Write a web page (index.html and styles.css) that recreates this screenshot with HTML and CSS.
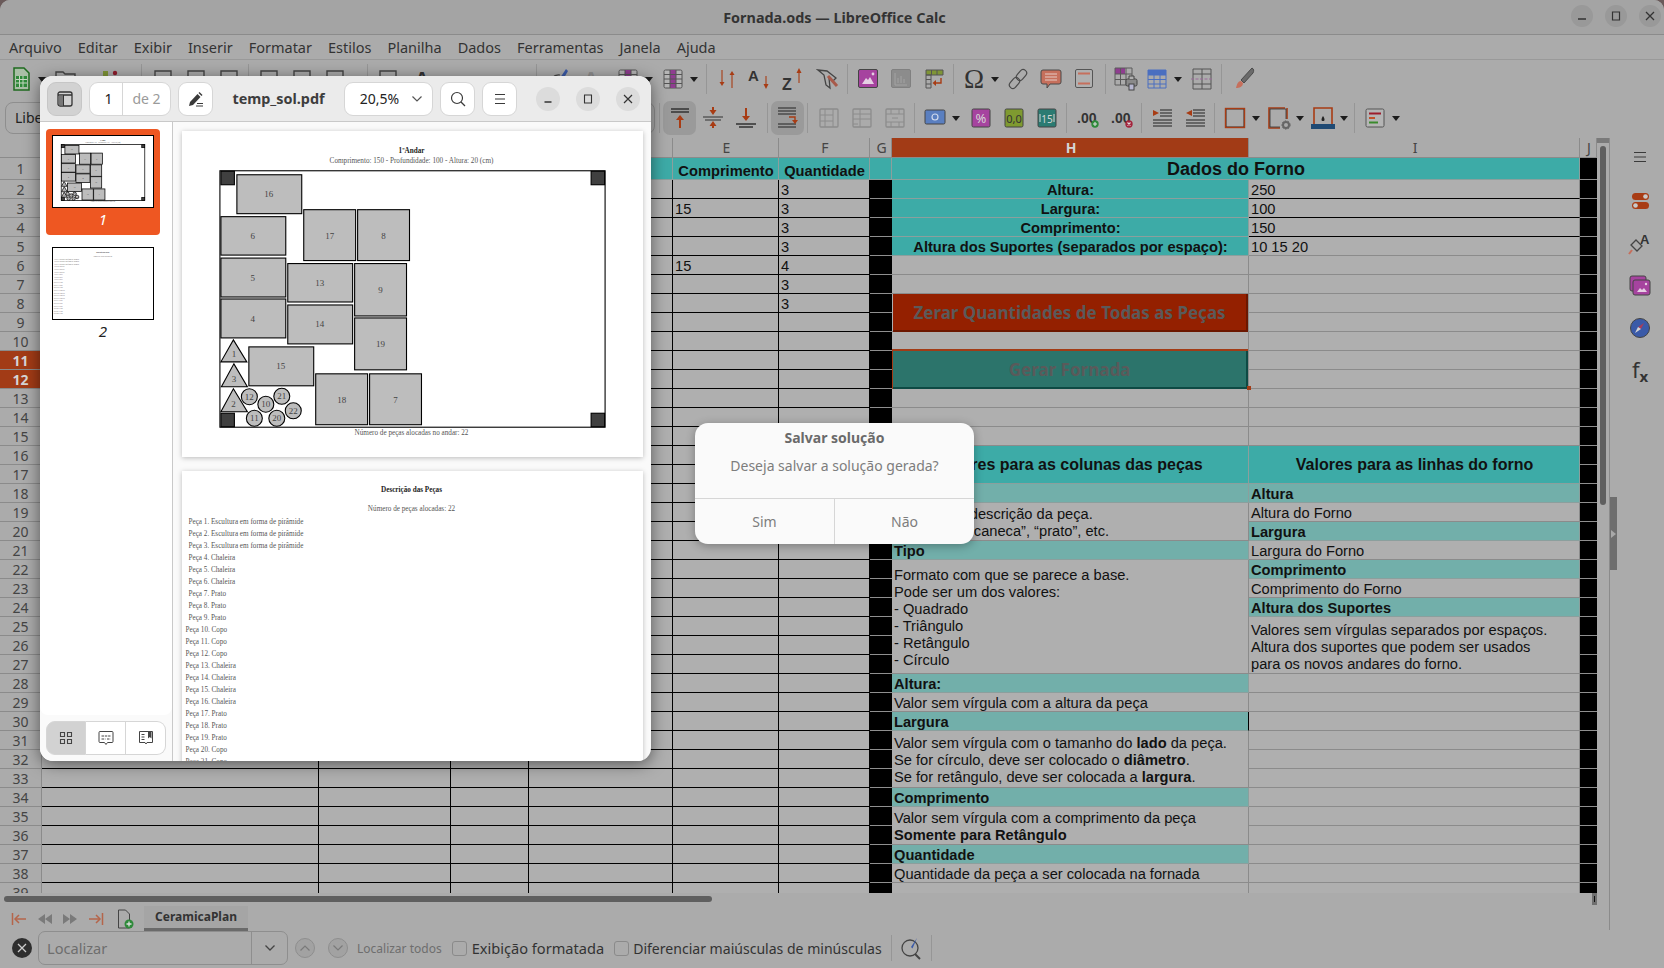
FILE: index.html
```html
<!DOCTYPE html><html lang="pt-BR">
<head>
  <meta charset="UTF-8">
  <title>Fornada.ods — LibreOffice Calc</title>
  <link rel="stylesheet" href="styles.css">
</head>
<body>
<svg class="defs" xmlns="http://www.w3.org/2000/svg">
  <symbol id="i-calc" viewBox="0 0 24 24"><path d="M5 1h10l5 5v17H5z" fill="#a9bfa6" stroke="#1f6b1f" stroke-width="1.5"/><path d="M7 9h11v11H7z" fill="#2f8a3a"/><path d="M7 12.5h11M7 16h11M10.5 9v11M14 9v11" stroke="#c4d8c0"/></symbol>
  <symbol id="i-stub" viewBox="0 0 24 24"><path d="M4 4h16v16H4z" fill="none" stroke="#444" stroke-width="1.4"/></symbol>
  <symbol id="i-folder" viewBox="0 0 24 24"><path d="M2 7V5h7l2 2h10v13H2z" fill="none" stroke="#444" stroke-width="1.4"/></symbol>
  <symbol id="i-nav" viewBox="0 0 24 24"><rect x="7" y="4" width="5" height="14" fill="#7f9536"/><circle cx="19" cy="6" r="2.200" fill="#8f1c2c"/></symbol>
  <symbol id="i-pen" viewBox="0 0 24 24"><path d="M4 20C3 12 8 7 14 8" fill="none" stroke="#444" stroke-width="1.200"/><path d="M12 14l8-12 2 2-7 12z" fill="#3a5aa8"/></symbol>
  <symbol id="i-letter" viewBox="0 0 24 24"><text x="12" y="19" text-anchor="middle" class="ic-bold" font-size="20">A</text></symbol>
  <symbol id="i-letter-off" viewBox="0 0 24 24"><text x="12" y="19" text-anchor="middle" class="ic-gray" font-size="20">A</text></symbol>
  <symbol id="i-table" viewBox="0 0 24 24"><rect x="3" y="3" width="18" height="18" rx="1.5" fill="#b5b5b5" stroke="#555"/><path d="M9 3h6v18H9z" fill="#8f3d90"/><path d="M3 7.5h18M3 12h18M3 16.500h18M9 3v18M15 3v18" stroke="#555"/></symbol>
  <symbol id="i-sort" viewBox="0 0 24 24"><path d="M7 3v14" stroke="#a83c14" stroke-width="1.1"/><path d="M4.500 15l2.500 4 2.500-4zM14.500 8l2.500-4 2.500 4z" fill="#a83c14"/><path d="M17 7v14" stroke="#a83c14" stroke-width="1.1"/></symbol>
  <symbol id="i-az" viewBox="0 0 24 24"><text x="0" y="14" class="ic-bold" font-size="15">A</text><path d="M18 9v10" stroke="#a83c14" stroke-width="1.1"/><path d="M15.500 17l2.500 5 2.500-5z" fill="#a83c14"/></symbol>
  <symbol id="i-za" viewBox="0 0 24 24"><text x="1" y="23" class="ic-bold" font-size="16">Z</text><path d="M18 5v11" stroke="#a83c14" stroke-width="1.1"/><path d="M15.500 6l2.500-5 2.500 5z" fill="#a83c14"/></symbol>
  <symbol id="i-filter" viewBox="0 0 24 24"><path d="M2 3l9 1 9 7-3 3-4-3 1 10-4-3-2-10z" fill="none" stroke="#444" stroke-width="1.3"/><path d="M12 9l9 10" stroke="#a85a4a" stroke-width="3"/></symbol>
  <symbol id="i-image" viewBox="0 0 24 24"><rect x="2.500" y="2.500" width="19" height="18" rx="1.500" fill="#a6439f" stroke="#444"/><path d="M6 17l4-6 2 2 2-3 4 7z" fill="#e5cfe3"/><circle cx="17" cy="7" r="1.400" fill="#e5cfe3"/></symbol>
  <symbol id="i-chart" viewBox="0 0 24 24"><rect x="2.500" y="2.500" width="19" height="18" rx="1.500" fill="#8c8c8c" stroke="#808080"/><path d="M6 6v12h12M9 16v-5M12 16V9M15 16v-4" stroke="#a3a3a3" fill="none"/></symbol>
  <symbol id="i-pivot" viewBox="0 0 24 24"><path d="M4 3h17v5H4z" fill="#7f9536" stroke="#555"/><path d="M4 8h5v13H4zM4 12.500h5M4 17h5M9.500 3v5M15 3v5" fill="none" stroke="#555"/><path d="M19 11v5h-7" stroke="#a83c14" stroke-width="1.400" fill="none"/><path d="M14 13l-3.500 3 3.500 3z" fill="#a83c14"/></symbol>
  <symbol id="i-omega" viewBox="0 0 24 24"><text x="12" y="21" text-anchor="middle" class="ic-omega">Ω</text></symbol>
  <symbol id="i-link" viewBox="0 0 24 24"><g fill="none" stroke="#4a4a4a" stroke-width="1.2"><rect x="12" y="2" width="7" height="12" rx="3.500" transform="rotate(40 15.500 8)"/><rect x="5" y="10" width="7" height="12" rx="3.500" transform="rotate(40 8.500 16)"/></g></symbol>
  <symbol id="i-comment" viewBox="0 0 24 24"><path d="M4 3h16a2 2 0 0 1 2 2v10a2 2 0 0 1-2 2H11l-3 4v-4H4a2 2 0 0 1-2-2V5a2 2 0 0 1 2-2z" fill="#c66f5c" stroke="#4a4a4a"/><path d="M6 7h12M6 10h12M6 13h12" stroke="#e5cdc6"/></symbol>
  <symbol id="i-header" viewBox="0 0 24 24"><rect x="3.500" y="2.500" width="17" height="18" rx="1.500" fill="#b0b0b0" stroke="#555"/><path d="M6 6.500h12M6 16.500h12" stroke="#c66f5c" stroke-width="2"/></symbol>
  <symbol id="i-tablelock" viewBox="0 0 24 24"><path d="M1 1h10v6H1z" fill="#8f3d90"/><path d="M1 1h17v17H1zM1 7h17M1 12.500h17M6.500 1v17M12 1v17" fill="none" stroke="#5a5a5a"/><rect x="12" y="12" width="11" height="7" rx="1.500" fill="#8a8a8a" stroke="#444"/><path d="M15 12V9h5v3" fill="#b0b0b0" stroke="#444"/><rect x="15" y="17" width="5" height="6" fill="#b7b7d0" stroke="#444"/></symbol>
  <symbol id="i-tableblue" viewBox="0 0 24 24"><path d="M3 3h18v5H3z" fill="#4a6fc0"/><path d="M3 3h18v18H3zM3 8h18M3 12.500h18M3 17h18M9 3v18M15 3v18" fill="none" stroke="#4a6fc0" stroke-width="1"/></symbol>
  <symbol id="i-freeze" viewBox="0 0 24 24"><path d="M3 2h18v20H3zM3 7h18M3 17h18M12 2v20" fill="none" stroke="#555"/><path d="M1 12h22" stroke="#9a6d9a" stroke-dasharray="3 1.500"/></symbol>
  <symbol id="i-brush" viewBox="0 0 24 24"><path d="M21 1c2 1 2 3 1 5l-9 10-3-3z" fill="#6a6a6a" stroke="#4a4a4a"/><path d="M10 14c-3 0-4 3-5 7 3 0 7-1 7-5z" fill="#c66f5c"/></symbol>

  <symbol id="i-atop" viewBox="0 0 24 24"><path d="M3 3h18M3 6h18" stroke="#333" stroke-width="1.300"/><path d="M12 22V12" stroke="#a83c14" stroke-width="2"/><path d="M8 14l4-5 4 5z" fill="#a83c14"/></symbol>
  <symbol id="i-amid" viewBox="0 0 24 24"><path d="M2 11h20M4 14h16" stroke="#333" stroke-width="1.200"/><path d="M12 1v6M12 22v-5" stroke="#a83c14" stroke-width="2"/><path d="M8.500 4l3.500 5 3.500-5zM8.500 20l3.500-5 3.500 5z" fill="#a83c14"/></symbol>
  <symbol id="i-abot" viewBox="0 0 24 24"><path d="M2 18h20M5 21h14" stroke="#333" stroke-width="1.300"/><path d="M12 2v10" stroke="#a83c14" stroke-width="2"/><path d="M8 10l4 5 4-5z" fill="#a83c14"/></symbol>
  <symbol id="i-wrap" viewBox="0 0 24 24"><path d="M2 2h18M2 5h18M2 8h18M2 18h18M2 21h18" stroke="#222" stroke-width="1.200"/><path d="M13 11h6v4" stroke="#a83c14" stroke-width="1.400" fill="none"/><path d="M16 14l3 4 3-4z" fill="#a83c14"/></symbol>
  <symbol id="i-merge" viewBox="0 0 24 24"><rect x="3" y="3" width="18" height="18" rx="1" fill="none" stroke="#8c8c8c" stroke-width="1.300"/><path d="M3 9h5M3 15h5M8 3v18M16 3v18M8 9h8M8 15h8" stroke="#8c8c8c" fill="none"/></symbol>
  <symbol id="i-split" viewBox="0 0 24 24"><rect x="3" y="3" width="18" height="18" rx="1" fill="none" stroke="#8c8c8c" stroke-width="1.300"/><path d="M3 8h18M3 13h18M3 18h5M10 3v18" stroke="#8c8c8c" fill="none"/></symbol>
  <symbol id="i-mergecenter" viewBox="0 0 24 24"><rect x="3" y="3" width="18" height="18" rx="1" fill="none" stroke="#8c8c8c" stroke-width="1.300"/><path d="M8 3v5h8V3M8 21v-5h8v5M3 8h5M3 16h5M16 8h5M16 16h5M9 12h6" stroke="#8c8c8c" fill="none"/></symbol>
  <symbol id="i-currency" viewBox="0 0 24 24"><rect x="2" y="4" width="20" height="14" rx="1.500" fill="#5a7fc0" stroke="#444"/><circle cx="12" cy="11" r="3" fill="none" stroke="#cfd9ec" stroke-width="1.200"/></symbol>
  <symbol id="i-percent" viewBox="0 0 24 24"><rect x="3" y="3" width="18" height="18" rx="1.500" fill="#a6439f" stroke="#444"/><text x="12" y="17" text-anchor="middle" class="ic-on" font-size="13">%</text></symbol>
  <symbol id="i-number" viewBox="0 0 24 24"><rect x="3" y="3" width="18" height="18" rx="1.500" fill="#7f9a30" stroke="#444"/><text x="12" y="17" text-anchor="middle" class="ic-dark" font-size="11">0,0</text></symbol>
  <symbol id="i-time" viewBox="0 0 24 24"><rect x="3" y="3" width="18" height="18" rx="1.500" fill="#2b7b72" stroke="#444"/><text x="12" y="16.500" text-anchor="middle" class="ic-on" font-size="10">15</text><path d="M5 8v8M19 8v8" stroke="#d5d5d5"/></symbol>
  <symbol id="i-decadd" viewBox="0 0 24 24"><text x="1" y="17" class="ic-bold" font-size="14">.00</text><circle cx="19" cy="18" r="3.700" fill="#2e8a3a"/><path d="M17 18h4M19 16v4" stroke="#ddd" stroke-width="1.100"/></symbol>
  <symbol id="i-decdel" viewBox="0 0 24 24"><text x="1" y="17" class="ic-bold" font-size="14">.00</text><circle cx="19" cy="18" r="3.700" fill="#a3233c"/><path d="M17.500 16.500l3 3M20.500 16.500l-3 3" stroke="#ddd" stroke-width="1.100"/></symbol>
  <symbol id="i-indent" viewBox="0 0 24 24"><path d="M10 4h12M10 7h12M10 10h12M3 14h19M3 17h19M3 20h19" stroke="#222" stroke-width="1.100"/><path d="M3 4l6 3-6 3z" fill="#a83c14"/></symbol>
  <symbol id="i-outdent" viewBox="0 0 24 24"><path d="M10 4h12M10 7h12M10 10h12M3 14h19M3 17h19M3 20h19" stroke="#222" stroke-width="1.100"/><path d="M9 4L3 7l6 3z" fill="#a83c14"/></symbol>
  <symbol id="i-border" viewBox="0 0 24 24"><rect x="3" y="3" width="18" height="18" fill="none" stroke="#333" stroke-width="1"/><rect x="2.500" y="2.500" width="19" height="19" fill="none" stroke="#a83c14" stroke-width="1.400"/></symbol>
  <symbol id="i-borderstyle" viewBox="0 0 24 24"><path d="M18 2H2v20h11M20 2v11" fill="none" stroke="#a83c14" stroke-width="1.600"/><path d="M3 3h16v10M3 3v18h10" fill="none" stroke="#333" stroke-width=".8"/><circle cx="19" cy="19" r="3" fill="none" stroke="#666" stroke-width="2"/><circle cx="19" cy="19" r="4.200" fill="none" stroke="#666" stroke-width="1" stroke-dasharray="1.500 1.500"/></symbol>
  <symbol id="i-bordercolor" viewBox="0 0 24 24"><path d="M3 19V2h18v17" fill="none" stroke="#a83c14" stroke-width="1.600"/><path d="M12 10c-2 3-2 5 0 5s2-2 0-5z" fill="#222"/><path d="M0 18h24v5H0z" fill="#1f4a74"/></symbol>
  <symbol id="i-cond" viewBox="0 0 24 24"><rect x="3" y="3" width="18" height="18" rx="1.500" fill="#b5b5b5" stroke="#555"/><path d="M6 7.500h12" stroke="#9c1c2c" stroke-width="2"/><path d="M6 12h6" stroke="#c2522a" stroke-width="2"/><path d="M6 16.500h9" stroke="#3a8a2c" stroke-width="2"/></symbol>

  <symbol id="i-props" viewBox="0 0 24 24"><rect x="4" y="3" width="17" height="7" rx="3.500" fill="#a83c14"/><circle cx="17.500" cy="6.500" r="2.300" fill="#c9c9c9"/><rect x="4" y="12" width="17" height="7" rx="3.500" fill="#a83c14"/><circle cx="7.500" cy="15.500" r="2.300" fill="#c9c9c9"/></symbol>
  <symbol id="i-styles" viewBox="0 0 24 24"><text x="12" y="12" class="ic-bold" font-size="13">A</text><path d="M8 8l6 6-5 5-6-6z" fill="none" stroke="#444" stroke-width="1.300"/><path d="M4 18l-3 4" stroke="#c66f5c" stroke-width="2"/></symbol>
  <symbol id="i-gallery" viewBox="0 0 24 24"><rect x="2" y="2" width="16" height="15" rx="2" fill="#a6439f" stroke="#444"/><rect x="5" y="6" width="17" height="15" rx="2" fill="#a6439f" stroke="#444"/><path d="M9 18l3-4 2 2 2-2 3 4z" fill="#e5cfe3"/><circle cx="18" cy="10" r="1.200" fill="#e5cfe3"/></symbol>
  <symbol id="i-compass" viewBox="0 0 24 24"><circle cx="12" cy="12" r="9.500" fill="#3a5aa8" stroke="#444"/><path d="M16 7l-3 6-3-2z" fill="#a83c5a"/><path d="M7 17l3-6 3 2z" fill="#d5d5d5"/></symbol>

  <symbol id="page-one" viewBox="0 0 462 326">
    <text x="230" y="21.500" class="pg-t pg-b">1ºAndar</text>
    <text x="230" y="32" class="pg-t">Comprimento: 150 - Profundidade: 100 - Altura: 20 (cm)</text>
    <rect class="frame" x="38" y="39.500" width="386" height="257"/>
    <g class="corner">
      <rect x="39" y="40" width="13.500" height="13.500"/><rect x="410" y="40" width="13.500" height="13.500"/>
      <rect x="39" y="282.500" width="13.500" height="13.500"/><rect x="410" y="282.500" width="13.500" height="13.500"/>
    </g>
    <g class="piece">
      <rect x="55" y="43.500" width="65" height="39"/><rect x="39" y="85.500" width="65" height="38.500"/>
      <rect x="122" y="78.500" width="52" height="51"/><rect x="176" y="78.500" width="52" height="51"/>
      <rect x="39" y="127" width="65" height="39"/><rect x="106" y="132.500" width="65" height="38.500"/>
      <rect x="173" y="132.500" width="52" height="52.500"/><rect x="39" y="168" width="65" height="39"/>
      <rect x="106" y="174" width="65" height="39"/><rect x="173" y="187" width="52" height="52"/>
      <rect x="67" y="216" width="65" height="39"/><rect x="134" y="243" width="52" height="51"/>
      <rect x="188" y="243" width="52" height="51"/>
      <path d="M51.500 209L65 231H39zM52 233L65.500 256H39.500zM51.500 258L65.500 281H39z"/>
      <circle cx="67.500" cy="266" r="8"/><circle cx="84" cy="273.500" r="8"/><circle cx="100" cy="265.500" r="8"/>
      <circle cx="111.500" cy="280" r="8"/><circle cx="72.500" cy="287.500" r="8"/><circle cx="95" cy="287.500" r="8"/>
    </g>
    <g class="pg-n">
      <text x="87" y="66">16</text><text x="71" y="108">6</text><text x="148" y="108">17</text><text x="202" y="108">8</text>
      <text x="71" y="150">5</text><text x="138" y="155">13</text><text x="199" y="162">9</text><text x="71" y="191">4</text>
      <text x="138" y="196">14</text><text x="199" y="216">19</text><text x="99" y="238">15</text><text x="160" y="272">18</text>
      <text x="214" y="272">7</text><text x="52" y="226">1</text><text x="52" y="251">3</text><text x="51.500" y="276">2</text>
      <text x="67.500" y="269">12</text><text x="84" y="276.500">10</text><text x="100" y="268.500">21</text>
      <text x="111.500" y="283">22</text><text x="72.500" y="290.500">11</text><text x="95" y="290.500">20</text>
    </g>
    <text x="230" y="304.500" class="pg-t">Número de peças alocadas no andar: 22</text>
  </symbol>

  <symbol id="page-two" viewBox="0 0 462 326">
    <text x="230" y="21" class="pg-t pg-b">Descrição das Peças</text>
    <text x="230" y="40" class="pg-t">Número de peças alocadas: 22</text>
    <g class="pg-l">
      <text x="6.500" y="53">Peça 1. Escultura em forma de pirâmide</text>
      <text x="6.500" y="65">Peça 2. Escultura em forma de pirâmide</text>
      <text x="6.500" y="77">Peça 3. Escultura em forma de pirâmide</text>
      <text x="6.500" y="89">Peça 4. Chaleira</text>
      <text x="6.500" y="101">Peça 5. Chaleira</text>
      <text x="6.500" y="113">Peça 6. Chaleira</text>
      <text x="6.500" y="125">Peça 7. Prato</text>
      <text x="6.500" y="137">Peça 8. Prato</text>
      <text x="6.500" y="149">Peça 9. Prato</text>
      <text x="3.500" y="161">Peça 10. Copo</text>
      <text x="3.500" y="173">Peça 11. Copo</text>
      <text x="3.500" y="185">Peça 12. Copo</text>
      <text x="3.500" y="197">Peça 13. Chaleira</text>
      <text x="3.500" y="209">Peça 14. Chaleira</text>
      <text x="3.500" y="221">Peça 15. Chaleira</text>
      <text x="3.500" y="233">Peça 16. Chaleira</text>
      <text x="3.500" y="245">Peça 17. Prato</text>
      <text x="3.500" y="257">Peça 18. Prato</text>
      <text x="3.500" y="269">Peça 19. Prato</text>
      <text x="3.500" y="281">Peça 20. Copo</text>
      <text x="3.500" y="293">Peça 21. Copo</text>
      <text x="3.500" y="305">Peça 22. Copo</text>
    </g>
  </symbol>
</svg>

<div class="app">
  <header class="titlebar">
    <span class="title">Fornada.ods — LibreOffice Calc</span>
    <div class="wm-btns">
      <span class="wm"><svg width="10" height="10" viewBox="0 0 10 10"><path d="M1 8h8" stroke="#333" stroke-width="1.400"/></svg></span>
      <span class="wm"><svg width="10" height="10" viewBox="0 0 10 10"><path d="M1.500 1h7v8h-7z" fill="none" stroke="#333" stroke-width="1.200"/></svg></span>
      <span class="wm"><svg width="10" height="10" viewBox="0 0 10 10"><path d="M1 1l8 8M9 1l-8 8" stroke="#333" stroke-width="1.300"/></svg></span>
    </div>
  </header>

  <nav class="menubar">
    <span>Arquivo</span><span>Editar</span><span>Exibir</span><span>Inserir</span><span>Formatar</span><span>Estilos</span><span>Planilha</span><span>Dados</span><span>Ferramentas</span><span>Janela</span><span>Ajuda</span>
  </nav>

  <div class="toolbar tb-one">
    <span class="tb"><svg><use href="#i-calc"/></svg></span><span class="caret"></span><span class="s1"></span>
    <span class="tb"><svg><use href="#i-folder"/></svg></span><span class="s9"></span>
    <span class="tb"><svg><use href="#i-nav"/></svg></span><span class="s14"></span>
    <span class="sep"></span><span class="s1"></span>
    <span class="tb"><svg><use href="#i-stub"/></svg></span><span class="tb"><svg><use href="#i-stub"/></svg></span><span class="tb"><svg><use href="#i-stub"/></svg></span>
    <span class="sep"></span>
    <span class="tb"><svg><use href="#i-stub"/></svg></span><span class="tb"><svg><use href="#i-stub"/></svg></span><span class="tb"><svg><use href="#i-stub"/></svg></span><span class="s13"></span>
    <span class="sep"></span>
    <span class="tb"><svg><use href="#i-stub"/></svg></span><span class="s1"></span><span class="tb"><svg><use href="#i-letter"/></svg></span><span class="s95"></span>
    <span class="sep"></span><span class="s1"></span>
    <span class="tb"><svg><use href="#i-pen"/></svg></span><span class="tb"><svg><use href="#i-letter-off"/></svg></span><span class="s4"></span>
    <span class="tb"><svg><use href="#i-table"/></svg></span><span class="caret"></span><span class="s1"></span>
    <span class="tb"><svg><use href="#i-table"/></svg></span><span class="caret"></span><span class="s3"></span>
    <span class="sep"></span>
    <span class="tb"><svg><use href="#i-sort"/></svg></span><span class="tb"><svg><use href="#i-az"/></svg></span><span class="tb"><svg><use href="#i-za"/></svg></span><span class="s2"></span><span class="tb"><svg><use href="#i-filter"/></svg></span>
    <span class="sep"></span>
    <span class="tb"><svg><use href="#i-image"/></svg></span><span class="tb"><svg><use href="#i-chart"/></svg></span><span class="tb"><svg><use href="#i-pivot"/></svg></span>
    <span class="sep"></span>
    <span class="tb"><svg><use href="#i-omega"/></svg></span><span class="caret"></span>
    <span class="tb"><svg><use href="#i-link"/></svg></span><span class="tb"><svg><use href="#i-comment"/></svg></span><span class="tb"><svg><use href="#i-header"/></svg></span><span class="s2"></span>
    <span class="sep"></span>
    <span class="tb"><svg><use href="#i-tablelock"/></svg></span><span class="tb tight"><svg><use href="#i-tableblue"/></svg></span><span class="caret"></span><span class="s1"></span><span class="tb"><svg><use href="#i-freeze"/></svg></span>
    <span class="sep"></span><span class="s1"></span>
    <span class="tb"><svg><use href="#i-brush"/></svg></span>
  </div>

  <div class="toolbar tb-two">
    <span class="fontbox">Liberation Sans</span>
    <span class="sep"></span>
    <span class="tb on"><svg><use href="#i-atop"/></svg></span><span class="tb"><svg><use href="#i-amid"/></svg></span><span class="tb"><svg><use href="#i-abot"/></svg></span><span class="s2"></span>
    <span class="sep"></span>
    <span class="tb on"><svg><use href="#i-wrap"/></svg></span>
    <span class="sep"></span><span class="s1"></span>
    <span class="tb"><svg><use href="#i-merge"/></svg></span><span class="tb"><svg><use href="#i-split"/></svg></span><span class="tb"><svg><use href="#i-mergecenter"/></svg></span>
    <span class="sep"></span>
    <span class="tb"><svg><use href="#i-currency"/></svg></span><span class="caret"></span><span class="s2"></span>
    <span class="tb"><svg><use href="#i-percent"/></svg></span><span class="tb"><svg><use href="#i-number"/></svg></span><span class="tb"><svg><use href="#i-time"/></svg></span>
    <span class="sep"></span><span class="s1"></span>
    <span class="tb"><svg><use href="#i-decadd"/></svg></span><span class="s1"></span><span class="tb"><svg><use href="#i-decdel"/></svg></span>
    <span class="sep"></span>
    <span class="tb"><svg><use href="#i-indent"/></svg></span><span class="tb"><svg><use href="#i-outdent"/></svg></span>
    <span class="sep"></span>
    <span class="tb"><svg><use href="#i-border"/></svg></span><span class="caret"></span>
    <span class="tb"><svg><use href="#i-borderstyle"/></svg></span><span class="caret"></span>
    <span class="tb"><svg><use href="#i-bordercolor"/></svg></span><span class="caret"></span><span class="s1"></span>
    <span class="sep"></span>
    <span class="tb"><svg><use href="#i-cond"/></svg></span><span class="caret"></span>
  </div>

  <div class="workspace">
    <div class="sheet">
      <div class="grid-row">
        <div class="grid-clip">
          <table class="grid">
            <colgroup><col class="c-rh"><col class="c-a"><col class="c-b"><col class="c-c"><col class="c-d"><col class="c-e"><col class="c-f"><col class="c-g"><col class="c-h"><col class="c-i"><col class="c-j"></colgroup>
            <tr class="r-head"><th></th><th>A</th><th>B</th><th>C</th><th>D</th><th>E</th><th>F</th><th>G</th><th class="sel">H</th><th>I</th><th>J</th></tr>
            <tr class="r-one"><th>1</th><td class="t"></td><td class="t"></td><td class="t"></td><td class="t"></td><td class="t b c">Comprimento</td><td class="t b c">Quantidade</td><td class="t"></td><td class="t b c big" colspan="2">Dados do Forno</td><td class="k"></td></tr>
            <tr><th>2</th><td></td><td></td><td></td><td></td><td></td><td>3</td><td class="k"></td><td class="t b c">Altura:</td><td class="iv">250</td><td class="k"></td></tr>
            <tr><th>3</th><td></td><td></td><td></td><td></td><td>15</td><td>3</td><td class="k"></td><td class="t b c">Largura:</td><td class="iv">100</td><td class="k"></td></tr>
            <tr><th>4</th><td></td><td></td><td></td><td></td><td></td><td>3</td><td class="k"></td><td class="t b c">Comprimento:</td><td class="iv">150</td><td class="k"></td></tr>
            <tr><th>5</th><td></td><td></td><td></td><td></td><td></td><td>3</td><td class="k"></td><td class="t b c">Altura dos Suportes (separados por espaço):</td><td class="s">10 15 20</td><td class="k"></td></tr>
            <tr><th>6</th><td></td><td></td><td></td><td></td><td>15</td><td>4</td><td class="k"></td><td class="s"></td><td class="s"></td><td class="k"></td></tr>
            <tr><th>7</th><td></td><td></td><td></td><td></td><td></td><td>3</td><td class="k"></td><td class="s"></td><td class="s"></td><td class="k"></td></tr>
            <tr><th>8</th><td></td><td></td><td></td><td></td><td></td><td>3</td><td class="k"></td><td class="s wrap" rowspan="2"><div class="btn btn-red">Zerar Quantidades de Todas as Peças</div></td><td class="s"></td><td class="k"></td></tr>
            <tr><th>9</th><td></td><td></td><td></td><td></td><td></td><td></td><td class="k"></td><td class="s"></td><td class="k"></td></tr>
            <tr><th>10</th><td></td><td></td><td></td><td></td><td></td><td></td><td class="k"></td><td class="s"></td><td class="s"></td><td class="k"></td></tr>
            <tr><th class="sel">11</th><td></td><td></td><td></td><td></td><td></td><td></td><td class="k"></td><td class="s wrap cur" rowspan="2"><div class="btn btn-green">Gerar Fornada</div><span class="handle"></span></td><td class="s"></td><td class="k"></td></tr>
            <tr><th class="sel">12</th><td></td><td></td><td></td><td></td><td></td><td></td><td class="k"></td><td class="s"></td><td class="k"></td></tr>
            <tr><th>13</th><td></td><td></td><td></td><td></td><td></td><td></td><td class="k"></td><td class="s"></td><td class="s"></td><td class="k"></td></tr>
            <tr><th>14</th><td></td><td></td><td></td><td></td><td></td><td></td><td class="k"></td><td class="s"></td><td class="s"></td><td class="k"></td></tr>
            <tr><th>15</th><td></td><td></td><td></td><td></td><td></td><td></td><td class="k"></td><td class="s"></td><td class="s"></td><td class="k"></td></tr>
            <tr><th>16</th><td></td><td></td><td></td><td></td><td></td><td></td><td class="k"></td><td class="t b c head2" rowspan="2">Valores para as colunas das peças</td><td class="t b c head2" rowspan="2">Valores para as linhas do forno</td><td class="k"></td></tr>
            <tr><th>17</th><td></td><td></td><td></td><td></td><td></td><td></td><td class="k"></td><td class="k"></td></tr>
            <tr><th>18</th><td></td><td></td><td></td><td></td><td></td><td></td><td class="k"></td><td class="l b">Nome</td><td class="l b">Altura</td><td class="k"></td></tr>
            <tr><th>19</th><td></td><td></td><td></td><td></td><td></td><td></td><td class="k"></td><td class="s mid" rowspan="2">Nome ou a descrição da peça.<br>Ex: “copo”, “caneca”, “prato”, etc.</td><td class="s">Altura do Forno</td><td class="k"></td></tr>
            <tr><th>20</th><td></td><td></td><td></td><td></td><td></td><td></td><td class="k"></td><td class="l b">Largura</td><td class="k"></td></tr>
            <tr><th>21</th><td></td><td></td><td></td><td></td><td></td><td></td><td class="k"></td><td class="l b">Tipo</td><td class="s">Largura do Forno</td><td class="k"></td></tr>
            <tr><th>22</th><td></td><td></td><td></td><td></td><td></td><td></td><td class="k"></td><td class="s mid" rowspan="6">Formato com que se parece a base.<br>Pode ser um dos valores:<br>- Quadrado<br>- Triângulo<br>- Retângulo<br>- Círculo</td><td class="l b">Comprimento</td><td class="k"></td></tr>
            <tr><th>23</th><td></td><td></td><td></td><td></td><td></td><td></td><td class="k"></td><td class="s">Comprimento do Forno</td><td class="k"></td></tr>
            <tr><th>24</th><td></td><td></td><td></td><td></td><td></td><td></td><td class="k"></td><td class="l b">Altura dos Suportes</td><td class="k"></td></tr>
            <tr><th>25</th><td></td><td></td><td></td><td></td><td></td><td></td><td class="k"></td><td class="s low" rowspan="3">Valores sem vírgulas separados por espaços.<br>Altura dos suportes que podem ser usados<br>para os novos andares do forno.</td><td class="k"></td></tr>
            <tr><th>26</th><td></td><td></td><td></td><td></td><td></td><td></td><td class="k"></td><td class="k"></td></tr>
            <tr><th>27</th><td></td><td></td><td></td><td></td><td></td><td></td><td class="k"></td><td class="k"></td></tr>
            <tr><th>28</th><td></td><td></td><td></td><td></td><td></td><td></td><td class="k"></td><td class="l b">Altura:</td><td class="s"></td><td class="k"></td></tr>
            <tr><th>29</th><td></td><td></td><td></td><td></td><td></td><td></td><td class="k"></td><td class="s">Valor sem vírgula com a altura da peça</td><td class="s"></td><td class="k"></td></tr>
            <tr><th>30</th><td></td><td></td><td></td><td></td><td></td><td></td><td class="k"></td><td class="l b edge">Largura</td><td class="s"></td><td class="k"></td></tr>
            <tr><th>31</th><td></td><td></td><td></td><td></td><td></td><td></td><td class="k"></td><td class="s mid" rowspan="3">Valor sem vírgula com o tamanho do <b>lado</b> da peça.<br>Se for círculo, deve ser colocado o <b>diâmetro</b>.<br>Se for retângulo, deve ser colocada a <b>largura</b>.</td><td class="s"></td><td class="k"></td></tr>
            <tr><th>32</th><td></td><td></td><td></td><td></td><td></td><td></td><td class="k"></td><td class="s"></td><td class="k"></td></tr>
            <tr><th>33</th><td></td><td></td><td></td><td></td><td></td><td></td><td class="k"></td><td class="s"></td><td class="k"></td></tr>
            <tr><th>34</th><td></td><td></td><td></td><td></td><td></td><td></td><td class="k"></td><td class="l b">Comprimento</td><td class="s"></td><td class="k"></td></tr>
            <tr><th>35</th><td></td><td></td><td></td><td></td><td></td><td></td><td class="k"></td><td class="s mid" rowspan="2">Valor sem vírgula com a comprimento da peça<br><b>Somente para Retângulo</b></td><td class="s"></td><td class="k"></td></tr>
            <tr><th>36</th><td></td><td></td><td></td><td></td><td></td><td></td><td class="k"></td><td class="s"></td><td class="k"></td></tr>
            <tr><th>37</th><td></td><td></td><td></td><td></td><td></td><td></td><td class="k"></td><td class="l b">Quantidade</td><td class="s"></td><td class="k"></td></tr>
            <tr><th>38</th><td></td><td></td><td></td><td></td><td></td><td></td><td class="k"></td><td class="s">Quantidade da peça a ser colocada na fornada</td><td class="s"></td><td class="k"></td></tr>
            <tr><th>39</th><td></td><td></td><td></td><td></td><td></td><td></td><td class="k"></td><td class="s"></td><td class="s"></td><td class="k"></td></tr>
          </table>
        </div>
        <div class="vscroll"><span class="vs-cap"></span><span class="vs-thumb"></span></div>
      </div>
      <div class="hscroll"><span class="hs-thumb"></span><span class="hs-split"></span></div>
      <div class="tabbar">
        <div class="tabnav">
          <svg width="16" height="14" viewBox="0 0 16 14"><path d="M1.500 1v12" stroke="#b5654a" stroke-width="1.500"/><path d="M4 7h11" stroke="#b5654a" stroke-width="1.500"/><path d="M8 3L4 7l4 4" fill="none" stroke="#b5654a" stroke-width="1.500"/></svg>
          <svg width="16" height="14" viewBox="0 0 16 14"><path d="M8 2L1 7l7 5zM15 2L8 7l7 5z" fill="#7a7a7a"/></svg>
          <svg width="16" height="14" viewBox="0 0 16 14"><path d="M1 2l7 5-7 5zM8 2l7 5-7 5z" fill="#7a7a7a"/></svg>
          <svg width="16" height="14" viewBox="0 0 16 14"><path d="M14.500 1v12" stroke="#b5654a" stroke-width="1.500"/><path d="M1 7h11" stroke="#b5654a" stroke-width="1.500"/><path d="M8 3l4 4-4 4" fill="none" stroke="#b5654a" stroke-width="1.500"/></svg>
          <svg class="tab-add" width="18" height="20" viewBox="0 0 18 20"><path d="M2.500 1h7l4 4v14h-11z" fill="none" stroke="#444"/><circle cx="13" cy="15" r="4.500" fill="#2e8a3a"/><path d="M10.500 15h5M13 12.500v5" stroke="#ddd" stroke-width="1.300"/></svg>
        </div>
        <span class="tab">CeramicaPlan</span>
      </div>
    </div>
    <aside class="sidebar">
      <span class="side-handle"></span>
      <svg class="menu-ic" width="16" height="12" viewBox="0 0 16 12"><path d="M2 1.500h12M2 6h12M2 10.500h12" stroke="#3a3a3a" stroke-width="1.200"/></svg>
      <svg class="side-ic"><use href="#i-props"/></svg>
      <svg class="side-ic"><use href="#i-styles"/></svg>
      <svg class="side-ic"><use href="#i-gallery"/></svg>
      <svg class="side-ic"><use href="#i-compass"/></svg>
      <span class="fx">f<sub>x</sub></span>
    </aside>
  </div>

  <div class="findbar">
    <span class="find-close"><svg width="10" height="10" viewBox="0 0 10 10"><path d="M1 1l8 8M9 1l-8 8" stroke="#ccc" stroke-width="1.300"/></svg></span>
    <div class="find-input">
      <span class="find-ph">Localizar</span>
      <span class="find-drop"><svg width="12" height="8" viewBox="0 0 12 8"><path d="M1.500 1.500L6 6l4.500-4.500" fill="none" stroke="#444" stroke-width="1.300"/></svg></span>
    </div>
    <span class="find-nav"><svg width="12" height="8" viewBox="0 0 12 8"><path d="M1.500 6.500L6 2l4.500 4.500" fill="none" stroke="#7a7a7a" stroke-width="1.200"/></svg></span>
    <span class="find-nav"><svg width="12" height="8" viewBox="0 0 12 8"><path d="M1.500 1.500L6 6l4.500-4.500" fill="none" stroke="#7a7a7a" stroke-width="1.200"/></svg></span>
    <span class="find-all">Localizar todos</span>
    <span class="chk"></span><span class="chk-label">Exibição formatada</span>
    <span class="chk chk-two"></span><span class="chk-label chk-label-two">Diferenciar maiúsculas de minúsculas</span>
    <span class="fsep"></span>
    <svg class="find-tool" width="22" height="24" viewBox="0 0 22 24"><circle cx="10" cy="12" r="8" fill="none" stroke="#444" stroke-width="1.300"/><path d="M15 18l5 5" stroke="#444" stroke-width="2"/><path d="M17 2l-6 9 1.500 1.500z" fill="#3a5aa8"/></svg>
    <span class="fsep"></span>
  </div>
</div>

<section class="pdf-win">
  <header class="pdf-head">
    <span class="pbtn pbtn-on"><svg width="16" height="16" viewBox="0 0 16 16"><rect x="1" y="1" width="14" height="14" rx="2" fill="none" stroke="#333" stroke-width="1.300"/><path d="M1 4h14" stroke="#333" stroke-width="1.300"/><path d="M2 4.500h4.500V14.500H3a1 1 0 0 1-1-1z" fill="#777"/><path d="M6.500 4v11" stroke="#333"/></svg></span>
    <div class="pager"><span class="pg-cur">1</span><span class="pg-of">de 2</span></div>
    <span class="pbtn pbtn-w"><svg width="16" height="16" viewBox="0 0 16 16"><path d="M1 15l1-4 7.500-8 3 3L5 14z" fill="#3a3a3a"/><path d="M10.500 2l1-1 3 3-1 1z" fill="#3a3a3a"/><path d="M9 12.500h6M8 15h7" stroke="#3a3a3a"/></svg></span>
    <span class="pdf-title">temp_sol.pdf</span>
    <span class="pzoom">20,5%<svg width="12" height="8" viewBox="0 0 12 8"><path d="M1.500 1.500L6 6l4.500-4.500" fill="none" stroke="#555" stroke-width="1.200"/></svg></span>
    <span class="pbtn pbtn-w pbtn-search"><svg width="16" height="16" viewBox="0 0 16 16"><circle cx="7" cy="7" r="5.500" fill="none" stroke="#3a3a3a" stroke-width="1.200"/><path d="M11 11l4 4" stroke="#3a3a3a" stroke-width="1.300"/></svg></span>
    <span class="pbtn pbtn-w"><svg width="14" height="14" viewBox="0 0 14 14"><path d="M2 2.500h10M2 7h10M2 11.500h10" stroke="#3a3a3a" stroke-width="1.100"/></svg></span>
    <div class="pdf-wm">
      <span class="pwm"><svg width="10" height="10" viewBox="0 0 10 10"><path d="M1.500 8h7" stroke="#333" stroke-width="1.300"/></svg></span>
      <span class="pwm"><svg width="10" height="10" viewBox="0 0 10 10"><path d="M1.500 1h7v8h-7z" fill="none" stroke="#333" stroke-width="1.100"/></svg></span>
      <span class="pwm"><svg width="10" height="10" viewBox="0 0 10 10"><path d="M1 1l8 8M9 1l-8 8" stroke="#333" stroke-width="1.200"/></svg></span>
    </div>
  </header>
  <div class="pdf-body">
    <div class="pdf-side">
      <div class="thumbs">
        <div class="thumb thumb-on">
          <svg class="thumb-page" viewBox="0 0 462 326" preserveAspectRatio="none"><use href="#page-one"/></svg>
          <span class="thumb-n">1</span>
        </div>
        <div class="thumb">
          <svg class="thumb-page" viewBox="0 0 462 326" preserveAspectRatio="none"><use href="#page-two"/></svg>
          <span class="thumb-n">2</span>
        </div>
      </div>
      <div class="switch">
        <span class="sw sw-on"><svg width="14" height="14" viewBox="0 0 14 14"><path d="M1.500 1.500h4v4h-4zM8.500 1.500h4v4h-4zM1.500 8.500h4v4h-4zM8.500 8.500h4v4h-4z" fill="none" stroke="#444" stroke-width="1.100"/></svg></span>
        <span class="sw"><svg width="16" height="16" viewBox="0 0 16 16"><path d="M2 1.500h12a1 1 0 0 1 1 1v9a1 1 0 0 1-1 1H9.500L8 14.500 6.500 12.500H2a1 1 0 0 1-1-1v-9a1 1 0 0 1 1-1z" fill="none" stroke="#444"/><path d="M3.500 6h9M3.500 9h4M9 9h3.500" stroke="#444" stroke-dasharray="2.500 .8"/></svg></span>
        <span class="sw"><svg width="16" height="16" viewBox="0 0 16 16"><path d="M1.500 1.500h13v11H9L8 14l-1-1.500H1.500z" fill="none" stroke="#444"/><path d="M3.500 4.500h3M3.500 7h3M3.500 9.500h3" stroke="#444"/><path d="M10 1.500h3.500v7l-1.750-1.500L10 8.500z" fill="#444"/></svg></span>
      </div>
    </div>
    <div class="pdf-main">
      <div class="pdf-page"><svg class="page-art" width="461" height="326"><use href="#page-one"/></svg></div>
      <div class="pdf-page"><svg class="page-art" width="461" height="326"><use href="#page-two"/></svg></div>
    </div>
  </div>
</section>

<section class="dialog">
  <div class="dlg-text">
    <h2>Salvar solução</h2>
    <p>Deseja salvar a solução gerada?</p>
  </div>
  <div class="dlg-btns"><span>Sim</span><span>Não</span></div>
</section>
</body>
</html>
```

FILE: styles.css
```css
* { box-sizing: border-box; }

body {
  margin: 0;
  width: 1664px;
  height: 968px;
  overflow: hidden;
  position: relative;
  background: #6a5a5a;
  font-family: "Noto Sans", sans-serif;
  color: #333;
}

.defs { display: none; }

.app {
  width: 1664px;
  height: 968px;
  display: flex;
  flex-direction: column;
  background: #ababab;
  border-radius: 10px 10px 0 0;
  overflow: hidden;
}

/* window title */
.titlebar {
  height: 35px;
  padding-left: 5px;
  background: #a4a4a4;
  border-bottom: 1px solid #8b8b8b;
  display: flex;
  align-items: center;
  justify-content: center;
  position: relative;
}

.title { font-size: 14.400px; font-weight: 700; color: #333; }

.wm-btns {
  position: absolute;
  right: 3px;
  top: 5px;
  display: flex;
  gap: 12px;
}

.wm {
  width: 22px;
  height: 22px;
  border-radius: 50%;
  background: #999;
  display: flex;
  align-items: center;
  justify-content: center;
}

.menubar {
  height: 25px;
  display: flex;
  gap: 16px;
  align-items: center;
  padding-left: 9px;
  font-size: 14.500px;
  color: #333;
  border-bottom: 1px solid #999;
}

/* toolbars */
.toolbar {
  display: flex;
  align-items: center;
  position: relative;
}

.tb-one { height: 38px; padding-left: 4px; }
.tb-two { height: 40px; padding-left: 5px; }

.tb {
  width: 33px;
  height: 34px;
  flex: none;
  display: flex;
  align-items: center;
  justify-content: center;
  border-radius: 7px;
}

.tb svg { width: 24px; height: 24px; }
.tb.on { background: #9a9a9a; }
.tb.tight { margin-left: -2px; }

.s1, .s2, .s3, .s4, .s9, .s13, .s14, .s95 { flex: none; }
.s1 { width: 1px; }
.s2 { width: 2px; }
.s3 { width: 3px; }
.s4 { width: 4px; }
.s9 { width: 9px; }
.s13 { width: 13px; }
.s14 { width: 14px; }
.s95 { width: 95px; }

.caret {
  width: 11px;
  height: 8px;
  flex: none;
  position: relative;
}

.caret::after {
  content: "";
  position: absolute;
  left: 1px;
  top: 2px;
  border-left: 4px solid transparent;
  border-right: 4px solid transparent;
  border-top: 5px solid #1c1c1c;
}

.sep {
  width: 1px;
  height: 30px;
  background: #969696;
  margin: 0 3px;
  flex: none;
}

.fontbox {
  width: 650px;
  height: 32px;
  border: 1px solid #8e8e8e;
  border-radius: 8px;
  font-size: 14px;
  line-height: 30px;
  padding-left: 9px;
  color: #222;
  margin-right: 1px;
  flex: none;
}

.ic-bold { font-family: "Liberation Sans", sans-serif; font-weight: 700; fill: #333; }
.ic-gray { font-family: "Liberation Sans", sans-serif; font-weight: 700; fill: #8f8f8f; }
.ic-omega { font-family: "Liberation Serif", serif; font-size: 27px; fill: #333; }
.ic-on { font-family: "Noto Sans", sans-serif; fill: #d5d5d5; }
.ic-dark { font-family: "Noto Sans", sans-serif; fill: #333; }

/* spreadsheet */
.workspace { flex: 1; display: flex; min-height: 0; }
.sheet { width: 1609px; display: flex; flex-direction: column; flex: none; }
.grid-row { height: 755px; display: flex; flex: none; }
.grid-clip { width: 1597px; height: 755px; overflow: hidden; flex: none; }

.grid {
  table-layout: fixed;
  width: 1597px;
  border-collapse: separate;
  border-spacing: 0;
  font-family: "Liberation Sans", sans-serif;
  font-size: 14.67px;
  line-height: 15px;
  color: #111;
}

.c-rh { width: 42px; }
.c-a { width: 277px; }
.c-b { width: 132px; }
.c-c { width: 78px; }
.c-d { width: 144px; }
.c-e { width: 106px; }
.c-f { width: 91px; }
.c-g { width: 22px; }
.c-h { width: 357px; }
.c-i { width: 331px; }
.c-j { width: 17px; }

.grid tr { height: 19px; }
.grid .r-head { height: 20px; }
.grid .r-one { height: 22px; }

.grid th {
  background: #ababab;
  border-right: 1px solid #8b8b8b;
  border-bottom: 1px solid #8b8b8b;
  font-family: "Noto Sans", sans-serif;
  font-weight: 400;
  font-size: 14px;
  line-height: 16px;
  color: #444;
  padding: 1px 0 0;
  overflow: hidden;
}

.grid .r-head th { padding: 0 0 0 2px; }
.grid th.sel { background: #a23b16; color: #d5d5d5; font-weight: 700; }

.grid td {
  background: #afafaf;
  border-right: 1px solid #000;
  border-bottom: 1px solid #000;
  padding: 0 1px 0 2px;
  vertical-align: bottom;
  white-space: nowrap;
  overflow: hidden;
}

.grid td.k { background: #000; border-right: 0; border-bottom-color: #8f8f8f; }
.grid td.s { border-color: #8b8b8b; }
.grid td.iv { border-right-color: #8b8b8b; }
.grid td.t { background: #3dabA7; border-color: #8b9f9d; }
.grid td.l { background: #72afaa; border-color: #8b9f9d; }
.grid td.b { font-weight: 700; }
.grid td.c { text-align: center; }
.grid td.big { font-size: 18px; line-height: 20px; }
.grid td.mid { vertical-align: middle; line-height: 17px; padding-top: 3px; }
.grid td.low { vertical-align: top; line-height: 17px; padding-top: 5px; }
.grid td.edge { border-right-color: #000; }
.grid td.head2 { vertical-align: middle; font-size: 16px; line-height: 17px; }

.grid td.wrap { padding: 0; position: relative; overflow: visible; vertical-align: top; }

.btn {
  height: 38px;
  margin: 0 0 -1px 1px;
  display: flex;
  align-items: center;
  justify-content: center;
  font-family: "Noto Sans", sans-serif;
  font-weight: 700;
  font-size: 17px;
  color: #5a5a5a;
  position: relative;
}

.btn-red { background: #942000; border-right: 2px solid #6c1700; border-bottom: 2px solid #6c1700; }
.btn-green { background: #2c746b; border-right: 2px solid #0e4a44; border-bottom: 2px solid #0e4a44; }

.cur::before { content: ""; position: absolute; left: 0; right: 0; top: -2px; height: 2px; background: #a23b16; z-index: 1; }
.cur::after { content: ""; position: absolute; left: 0; top: 0; width: 1px; height: 38px; background: #a23b16; z-index: 1; }

.handle {
  position: absolute;
  right: -3px;
  bottom: -2px;
  width: 4px;
  height: 4px;
  background: #a23b16;
  z-index: 1;
}

.vscroll { width: 12px; flex: none; position: relative; }
.vs-cap { position: absolute; left: 0; top: 0; width: 12px; height: 5px; background: #7a7a7a; }
.vs-thumb { position: absolute; left: 3px; top: 8px; width: 6px; height: 359px; border-radius: 3px; background: #5f5f5f; }

.hscroll { height: 12px; flex: none; position: relative; }
.hs-thumb { position: absolute; left: 4px; top: 3px; width: 708px; height: 6px; border-radius: 3px; background: #5f5f5f; }
.hs-split { position: absolute; left: 1592px; top: 0; width: 5px; height: 12px; background: #6f6f6f; }
.hs-split::after { content: ""; position: absolute; left: 2px; top: 3px; width: 1px; height: 6px; background: #111; }

.tabbar { height: 25px; display: flex; align-items: flex-start; flex: none; }
.tabnav { width: 144px; display: flex; align-items: center; gap: 9.500px; padding: 3px 0 0 11px; height: 25px; }
.tab-add { margin-left: 3px; }

.tab {
  width: 104px;
  height: 25px;
  margin-top: 1px;
  border-bottom: 3px solid #6a6a6a;
  background: #a5a5a5;
  font-size: 12px;
  font-weight: 700;
  line-height: 21px;
  text-align: center;
  color: #333;
}

/* right deck */
.sidebar {
  flex: 1;
  border-left: 1px solid #8b8b8b;
  display: flex;
  flex-direction: column;
  align-items: center;
  position: relative;
  padding: 13px 0 0 6px;
}

.menu-ic { margin-bottom: 27px; }
.side-ic { width: 24px; height: 24px; margin-bottom: 18px; }

.fx {
  font-family: "Noto Sans", sans-serif;
  font-size: 22px;
  line-height: 22px;
  color: #333;
}

.fx sub { font-size: 15px; font-weight: 700; vertical-align: -4px; line-height: 0; }

.side-handle {
  position: absolute;
  left: 0;
  top: 359px;
  width: 7px;
  height: 73px;
  background: #6e6e6e;
}

.side-handle::after {
  content: "";
  position: absolute;
  left: 1px;
  top: 33px;
  border-top: 4px solid transparent;
  border-bottom: 4px solid transparent;
  border-left: 5px solid #a8a8a8;
}

/* find toolbar */
.findbar {
  height: 38px;
  flex: none;
  display: flex;
  align-items: center;
  padding: 0 0 2px 12px;
  font-size: 14.600px;
  color: #333;
}

.find-close {
  width: 20px;
  height: 20px;
  border-radius: 50%;
  background: #2e2e2e;
  display: flex;
  align-items: center;
  justify-content: center;
  flex: none;
}

.find-input {
  width: 250px;
  height: 34px;
  margin-left: 6px;
  border: 1px solid #8e8e8e;
  border-radius: 7px;
  display: flex;
  align-items: center;
  justify-content: space-between;
  flex: none;
}

.find-ph { padding-left: 8px; color: #6e6e6e; }
.find-drop { width: 36px; height: 32px; border-left: 1px solid #8e8e8e; display: flex; align-items: center; justify-content: center; }

.find-nav {
  width: 20px;
  height: 20px;
  margin-left: 7px;
  border-radius: 50%;
  background: #a2a2a2;
  border: 1px solid #8e8e8e;
  display: flex;
  align-items: center;
  justify-content: center;
  flex: none;
}

.find-nav + .find-nav { margin-left: 13px; }
.find-all { font-size: 12px; color: #6e6e6e; margin-left: 9px; }

.chk {
  width: 15px;
  height: 15px;
  margin: 0 5px 0 10px;
  border: 1px solid #8a8a8a;
  border-radius: 3px;
  flex: none;
}

.chk-two { margin-left: 10px; margin-right: 4px; }
.chk-label { white-space: nowrap; }
.chk-label-two { font-size: 14.050px; }
.fsep { width: 1px; height: 26px; background: #969696; margin-left: 9px; flex: none; }
.find-tool { margin-left: 8px; flex: none; }

/* evince window */
.pdf-win {
  position: absolute;
  left: 40px;
  top: 76px;
  width: 611px;
  height: 685px;
  border-radius: 13px;
  background: #fafafa;
  overflow: hidden;
  display: flex;
  flex-direction: column;
  box-shadow: 0 3px 16px rgba(0, 0, 0, 0.5);
  font-size: 14px;
  color: #333;
}

.pdf-head {
  height: 46px;
  flex: none;
  background: #ebebeb;
  border-bottom: 1px solid #c9c9c9;
  display: flex;
  align-items: center;
  padding-left: 7px;
}

.pbtn {
  width: 35px;
  height: 34px;
  border-radius: 9px;
  display: flex;
  align-items: center;
  justify-content: center;
  flex: none;
}

.pbtn-on { background: #d2d2d2; border: 1px solid #c6c6c6; }
.pbtn-w { background: #fff; border: 1px solid #d6d6d6; }

.pager {
  width: 82px;
  height: 34px;
  margin: 0 7px;
  background: #fff;
  border: 1px solid #d6d6d6;
  border-radius: 9px;
  display: flex;
  align-items: center;
  flex: none;
}

.pg-cur { width: 33px; padding-left: 5px; text-align: center; line-height: 32px; border-right: 1px solid #d6d6d6; color: #222; }
.pg-of { flex: 1; text-align: center; color: #9a9a9a; }

.pdf-title { width: 131px; text-align: center; font-weight: 700; font-size: 14.400px; color: #3d3d3d; flex: none; }

.pzoom {
  width: 89px;
  height: 34px;
  padding-left: 6px;
  background: #fff;
  border: 1px solid #d6d6d6;
  border-radius: 9px;
  display: flex;
  align-items: center;
  justify-content: center;
  gap: 12px;
  color: #222;
  flex: none;
}

.pbtn-search { margin: 0 7px; }

.pdf-wm { display: flex; gap: 16px; margin-left: 19px; }

.pwm {
  width: 24px;
  height: 24px;
  border-radius: 50%;
  background: #dcdcdc;
  display: flex;
  align-items: center;
  justify-content: center;
}

.pdf-body { flex: 1; display: flex; min-height: 0; }

.pdf-side {
  width: 133px;
  flex: none;
  border-right: 1px solid #c9c9c9;
  display: flex;
  flex-direction: column;
  background: #fafafa;
}

.thumbs {
  flex: 1;
  background: #fff;
  padding: 7px 12px 0 6px;
  display: flex;
  flex-direction: column;
  gap: 6px;
  border-radius: 0 0 8px 8px;
}

.thumb {
  height: 106px;
  border-radius: 4px;
  padding-top: 6px;
  display: flex;
  flex-direction: column;
  align-items: center;
}

.thumb-on { background: #ee5722; }

.thumb-page {
  width: 102px;
  height: 73px;
  background: #fff;
  border: 1px solid #000;
  flex: none;
  stroke-width: 3.400;
}

.thumb-n {
  font-family: "Noto Sans", sans-serif;
  font-style: italic;
  font-size: 15px;
  line-height: 20px;
  color: #222;
  margin-top: 1px;
}

.thumb-on .thumb-n { color: #fff; }

.switch {
  height: 46px;
  flex: none;
  padding: 6px;
  display: flex;
}

.switch .sw {
  width: 40px;
  height: 34px;
  background: #fff;
  border: 1px solid #d6d6d6;
  border-left: 0;
  display: flex;
  align-items: center;
  justify-content: center;
}

.switch .sw:first-child { border-left: 1px solid #d6d6d6; border-radius: 9px 0 0 9px; }
.switch .sw:last-child { border-radius: 0 9px 9px 0; }
.switch .sw-on { background: #d2d2d2; }

.pdf-main {
  flex: 1;
  padding: 9px 6px 0 9px;
  display: flex;
  flex-direction: column;
  gap: 14px;
  min-width: 0;
}

.pdf-page {
  width: 461px;
  height: 326px;
  flex: none;
  background: #fff;
  box-shadow: 0 1px 5px rgba(0, 0, 0, 0.25);
}

.page-art { display: block; stroke-width: 1.100; }

.pg-t, .pg-n text, .pg-l text {
  font-family: "Liberation Serif", serif;
  stroke: none;
  fill: #555;
  text-anchor: middle;
  font-size: 7.200px;
}

.pg-b { font-weight: 700; fill: #222; }
.pg-n text { font-size: 9px; fill: #444; }
.pg-l text { text-anchor: start; font-size: 7.200px; }

.frame { fill: none; stroke: #000; }
.corner rect { fill: #404040; stroke: #000; }
.piece rect, .piece path, .piece circle { fill: #bdbdbd; stroke: #000; }

/* confirm dialog */
.dialog {
  position: absolute;
  left: 695px;
  top: 423px;
  width: 279px;
  height: 121px;
  background: #fafafa;
  border-radius: 13px;
  box-shadow: 0 2px 10px rgba(0, 0, 0, 0.3);
  display: flex;
  flex-direction: column;
  overflow: hidden;
}

.dlg-text { height: 76px; border-bottom: 1px solid #d6d6d6; text-align: center; padding-top: 5px; flex: none; }
.dlg-text h2 { margin: 0; font-size: 14px; font-weight: 700; line-height: 20px; color: #6a6a6a; }
.dlg-text p { margin: 8px 0 0; font-size: 14px; line-height: 20px; color: #7d7d7d; }

.dlg-btns { flex: 1; display: flex; font-size: 14px; color: #7d7d7d; }
.dlg-btns span { flex: 1; display: flex; align-items: center; justify-content: center; }
.dlg-btns span + span { border-left: 1px solid #d6d6d6; }
```
